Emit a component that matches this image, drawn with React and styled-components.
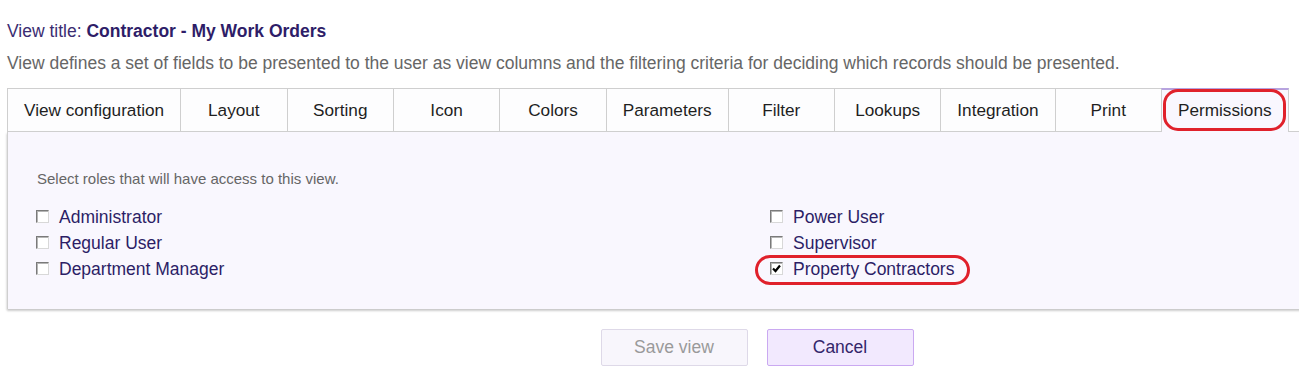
import React from "react";
import styled, { createGlobalStyle } from "styled-components";

const Global = createGlobalStyle`
  html, body { margin: 0; padding: 0; background: #fff; overflow: hidden; }
  body { font-family: Arial, "Liberation Sans", Helvetica, sans-serif; }
`;

const Page = styled.div`
  width: 1500px;
  padding: 21px 0 0 7px;
`;

const TitleLine = styled.div`
  font-size: 17.5px;
  line-height: 20px;
  color: #3b2d72;
`;

const TitleValue = styled.b`
  color: #2e1d68;
`;

const Description = styled.div`
  margin-top: 12px;
  font-size: 17.5px;
  line-height: 20px;
  color: #666;
`;

const TabBar = styled.div`
  margin-top: 15px;
  display: flex;
  border-bottom: 1px solid #cfcfcf;
  position: relative;
`;

const Tab = styled.div`
  box-sizing: border-box;
  position: relative;
  min-width: 106.4px;
  padding: 0 16px;
  display: flex;
  align-items: center;
  justify-content: center;
  font-size: 17.2px;
  color: #1f1f1f;
  white-space: nowrap;
  border-top: ${p => (p.$active ? "2px solid #b7a3df" : "1px solid #cfcfcf")};
  border-left: 1px solid #cfcfcf;
  border-right: ${p => (p.$last ? "1px solid #cfcfcf" : "none")};
  background: ${p => (p.$active ? "#f9f7fe" : "#fdfdfe")};
  margin-bottom: ${p => (p.$active ? "-1px" : "0")};
  height: ${p => (p.$active ? "44px" : "43px")};
  padding-bottom: ${p => (p.$active ? "1px" : "0")};
`;

const Highlight = styled.div`
  position: absolute;
  border: 3px solid #e0212b;
  border-radius: 15px;
  pointer-events: none;
  box-sizing: border-box;
`;

const TabHighlight = styled(Highlight)`
  left: 1px;
  right: 2px;
  top: -1px;
  bottom: 1px;
`;

const Panel = styled.div`
  background: #f9f7fe;
  border-left: 1px solid #cfcfcf;
  box-shadow: 0 2px 2px rgba(0, 0, 0, 0.18), -1px 1px 2px rgba(0, 0, 0, 0.06);
  padding: 39px 0 27px 28px;
`;

const Hint = styled.div`
  font-size: 15px;
  line-height: 16px;
  color: #666;
  margin-left: 1px;
`;

const Columns = styled.div`
  margin-top: 17px;
  display: grid;
  grid-template-columns: 734px 1fr;
`;

const Column = styled.div`
  display: flex;
  flex-direction: column;
`;

const Row = styled.label`
  position: relative;
  display: flex;
  align-items: center;
  height: 26px;
  font-size: 17.5px;
  color: #2c1e66;
  align-self: flex-start;
`;

const Box = styled.span`
  box-sizing: border-box;
  width: 13px;
  height: 13px;
  margin-right: 10px;
  margin-top: -1px;
  background: #fff;
  border: 1px solid #7a7a7a;
  border-right-color: #d8d8d8;
  border-bottom-color: #d8d8d8;
  box-shadow: inset 1px 1px 0 #b5b5b5;
  display: flex;
  align-items: center;
  justify-content: center;
`;

const RowHighlight = styled(Highlight)`
  left: -15px;
  right: -16px;
  top: -1px;
  bottom: -3px;
`;

const Buttons = styled.div`
  display: flex;
  justify-content: center;
  gap: 19px;
  margin-top: 20px;
`;

const Button = styled.button`
  box-sizing: border-box;
  width: 147px;
  height: 37px;
  font-family: inherit;
  font-size: 17.5px;
  border-radius: 2px;
  border: 1px solid ${p => (p.$primary ? "#caa9f1" : "#ded9e8")};
  background: ${p => (p.$primary ? "#f2e9fe" : "#f8f6fc")};
  color: ${p => (p.$primary ? "#34266a" : "#9a9a9a")};
  padding: 0;
`;

const tabs = [
  "View configuration",
  "Layout",
  "Sorting",
  "Icon",
  "Colors",
  "Parameters",
  "Filter",
  "Lookups",
  "Integration",
  "Print",
  "Permissions",
];

const Check = () => (
  <svg width="9" height="9" viewBox="0 0 9 9">
    <path d="M1 4.5 L3.5 7 L8 1.5" stroke="#000" strokeWidth="2.2" fill="none" />
  </svg>
);

const Role = ({ label, checked, highlight }) => (
  <Row>
    <Box>{checked && <Check />}</Box>
    {label}
    {highlight && <RowHighlight />}
  </Row>
);

export default function App() {
  return (
    <>
      <Global />
      <Page>
        <TitleLine>
          View title: <TitleValue>Contractor - My Work Orders</TitleValue>
        </TitleLine>
        <Description>
          View defines a set of fields to be presented to the user as view columns and the filtering criteria for deciding which records should be presented.
        </Description>
        <TabBar>
          {tabs.map((t, i) => {
            const active = t === "Permissions";
            return (
              <Tab key={t} $active={active} $last={i === tabs.length - 1}>
                {t}
                {active && <TabHighlight />}
              </Tab>
            );
          })}
        </TabBar>
        <Panel>
          <Hint>Select roles that will have access to this view.</Hint>
          <Columns>
            <Column>
              <Role label="Administrator" />
              <Role label="Regular User" />
              <Role label="Department Manager" />
            </Column>
            <Column>
              <Role label="Power User" />
              <Role label="Supervisor" />
              <Role label="Property Contractors" checked highlight />
            </Column>
          </Columns>
        </Panel>
        <Buttons>
          <Button disabled>Save view</Button>
          <Button $primary>Cancel</Button>
        </Buttons>
      </Page>
    </>
  );
}
